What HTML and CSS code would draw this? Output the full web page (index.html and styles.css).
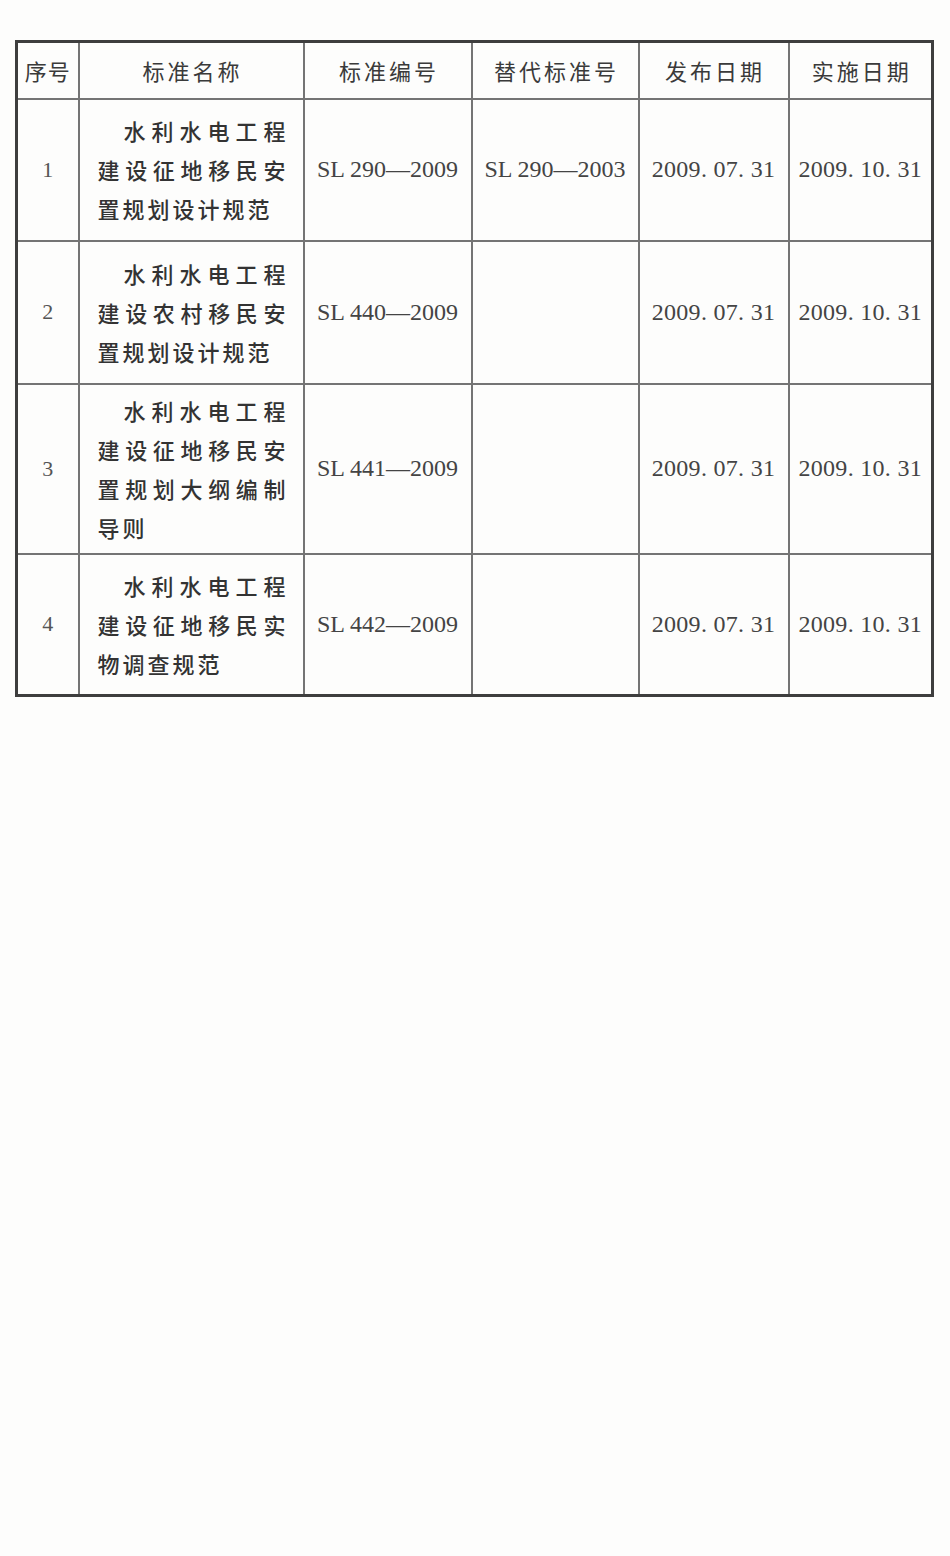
FILE: index.html
```html
<!DOCTYPE html>
<html lang="zh-CN">
<head>
<meta charset="utf-8">
<title>标准目录</title>
<link rel="stylesheet" href="styles.css">
</head>
<body>
<table class="std-table">
  <colgroup>
    <col class="c-no">
    <col class="c-name">
    <col class="c-code">
    <col class="c-repl">
    <col class="c-pub">
    <col class="c-eff">
  </colgroup>
  <thead>
    <tr class="head-row">
      <th class="h-no">序号</th>
      <th>标准名称</th>
      <th>标准编号</th>
      <th>替代标准号</th>
      <th>发布日期</th>
      <th>实施日期</th>
    </tr>
  </thead>
  <tbody>
    <tr class="row-a">
      <td class="num">1</td>
      <td class="name"><p>水利水电工程建设征地移民安置规划设计规范</p></td>
      <td class="code">SL 290—2009</td>
      <td class="code">SL 290—2003</td>
      <td class="date">2009. 07. 31</td>
      <td class="date">2009. 10. 31</td>
    </tr>
    <tr class="row-b">
      <td class="num">2</td>
      <td class="name"><p>水利水电工程建设农村移民安置规划设计规范</p></td>
      <td class="code">SL 440—2009</td>
      <td class="code"></td>
      <td class="date">2009. 07. 31</td>
      <td class="date">2009. 10. 31</td>
    </tr>
    <tr class="row-c">
      <td class="num">3</td>
      <td class="name"><p>水利水电工程建设征地移民安置规划大纲编制导则</p></td>
      <td class="code">SL 441—2009</td>
      <td class="code"></td>
      <td class="date">2009. 07. 31</td>
      <td class="date">2009. 10. 31</td>
    </tr>
    <tr class="row-d">
      <td class="num">4</td>
      <td class="name"><p>水利水电工程建设征地移民实物调查规范</p></td>
      <td class="code">SL 442—2009</td>
      <td class="code"></td>
      <td class="date">2009. 07. 31</td>
      <td class="date">2009. 10. 31</td>
    </tr>
  </tbody>
</table>
</body>
</html>
```
FILE: styles.css
```css
html, body {
  margin: 0;
  padding: 0;
  background: #fdfdfc;
}

body {
  padding: 40px 0 0 15px;
  font-family: "Liberation Serif", "Noto Sans CJK SC", serif;
  color: #3c3c3c;
}

.std-table {
  border-collapse: collapse;
  table-layout: fixed;
  width: 916px;
  border: 3px solid #3e3e3e;
}

.c-no { width: 62px; }
.c-name { width: 225px; }
.c-code { width: 168px; }
.c-repl { width: 167px; }
.c-pub { width: 150px; }
.c-eff { width: 144px; }

.std-table th,
.std-table td {
  border: 2px solid #747474;
  padding: 0;
  vertical-align: middle;
  text-align: center;
}

.head-row { height: 57px; }
.row-a { height: 142px; }
.row-b { height: 143px; }
.row-c { height: 170px; }
.row-d { height: 142px; }

.std-table th {
  font-family: "Noto Sans CJK SC", sans-serif;
  font-weight: 400;
  font-size: 22px;
  letter-spacing: 3px;
  color: #3a3a3a;
  padding-left: 3px;
}

.std-table th.h-no {
  letter-spacing: 1px;
  padding-left: 0;
}

.std-table td.num {
  font-family: "Liberation Serif", serif;
  font-size: 22px;
  color: #555;
}

.std-table td.name {
  padding: 0 14px 0 18px;
  text-align: justify;
}

.name p {
  margin: 0;
  font-family: "Noto Sans CJK SC", sans-serif;
  font-weight: 500;
  font-size: 22px;
  line-height: 39px;
  letter-spacing: 3px;
  text-align: justify;
  text-indent: 26px;
  color: #333;
}

.std-table td.code,
.std-table td.date {
  font-family: "Liberation Serif", serif;
  font-size: 24px;
  color: #444;
  white-space: nowrap;
}

.std-table td.date {
  letter-spacing: 0.3px;
}
```
